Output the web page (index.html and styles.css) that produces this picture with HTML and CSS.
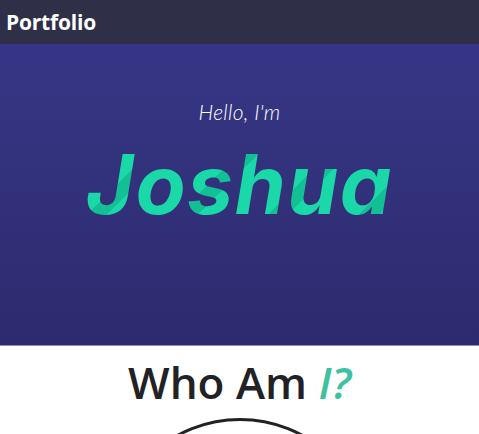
FILE: index.html
```html
<!DOCTYPE html>
<html>
<head>
<meta charset="utf-8">
<link rel="stylesheet" href="styles.css">
</head>
<body>
<header class="topbar">
  <span class="brand">Portfolio</span>
</header>
<section class="hero">
  <p class="hello">Hello, I'm</p>
  <h1 class="name">Joshua</h1>
</section>
<section class="about">
  <h2 class="about-title">Who Am <em class="accent">I?</em></h2>
  <div class="avatar"></div>
</section>
</body>
</html>
```
FILE: styles.css
```css
* { box-sizing: border-box; }
html, body { margin: 0; padding: 0; }
body {
  font-family: "Open Sans", "Noto Sans", sans-serif;
  background: #ffffff;
  overflow: hidden;
  height: 434px;
}
.topbar {
  height: 44px;
  background: #2f2f47;
  display: flex;
  align-items: center;
  padding-left: 6px;
}
.brand {
  color: #ffffff;
  font-weight: 700;
  font-size: 21px;
  letter-spacing: -0.2px;
}
.hero {
  height: 302px;
  background: linear-gradient(180deg, #373686 0%, #2c2b6e 100%);
  border-bottom: 1px solid #8f8db5;
  display: flex;
  flex-direction: column;
  align-items: center;
  padding-top: 56px;
}
.hello {
  margin: 0;
  color: #ffffff;
  font-family: "Lato", sans-serif;
  font-style: italic;
  font-weight: 300;
  font-size: 21px;
  line-height: 24px;
  letter-spacing: 0.3px;
}
.name {
  margin: 21px 0 0;
  font-family: "Inter", sans-serif;
  font-style: italic;
  font-weight: 700;
  font-size: 82px;
  line-height: 80px;
  letter-spacing: 1.5px;
  background: repeating-linear-gradient(135deg, #1bd8a9 0px, #1bd8a9 50px, #13c096 50px, #13c096 64px);
  -webkit-background-clip: text;
  background-clip: text;
  color: transparent;
}
.about {
  display: flex;
  flex-direction: column;
  align-items: center;
  padding-top: 8px;
}
.about-title {
  margin: 0;
  color: #222226;
  font-weight: 600;
  font-size: 44px;
  line-height: 56px;
}
.accent {
  color: #3ec1a1;
  font-style: italic;
}
.avatar {
  margin-top: 8px;
  width: 264px;
  height: 264px;
  border-radius: 50%;
  border: 3px solid #222226;
  flex-shrink: 0;
}
```
